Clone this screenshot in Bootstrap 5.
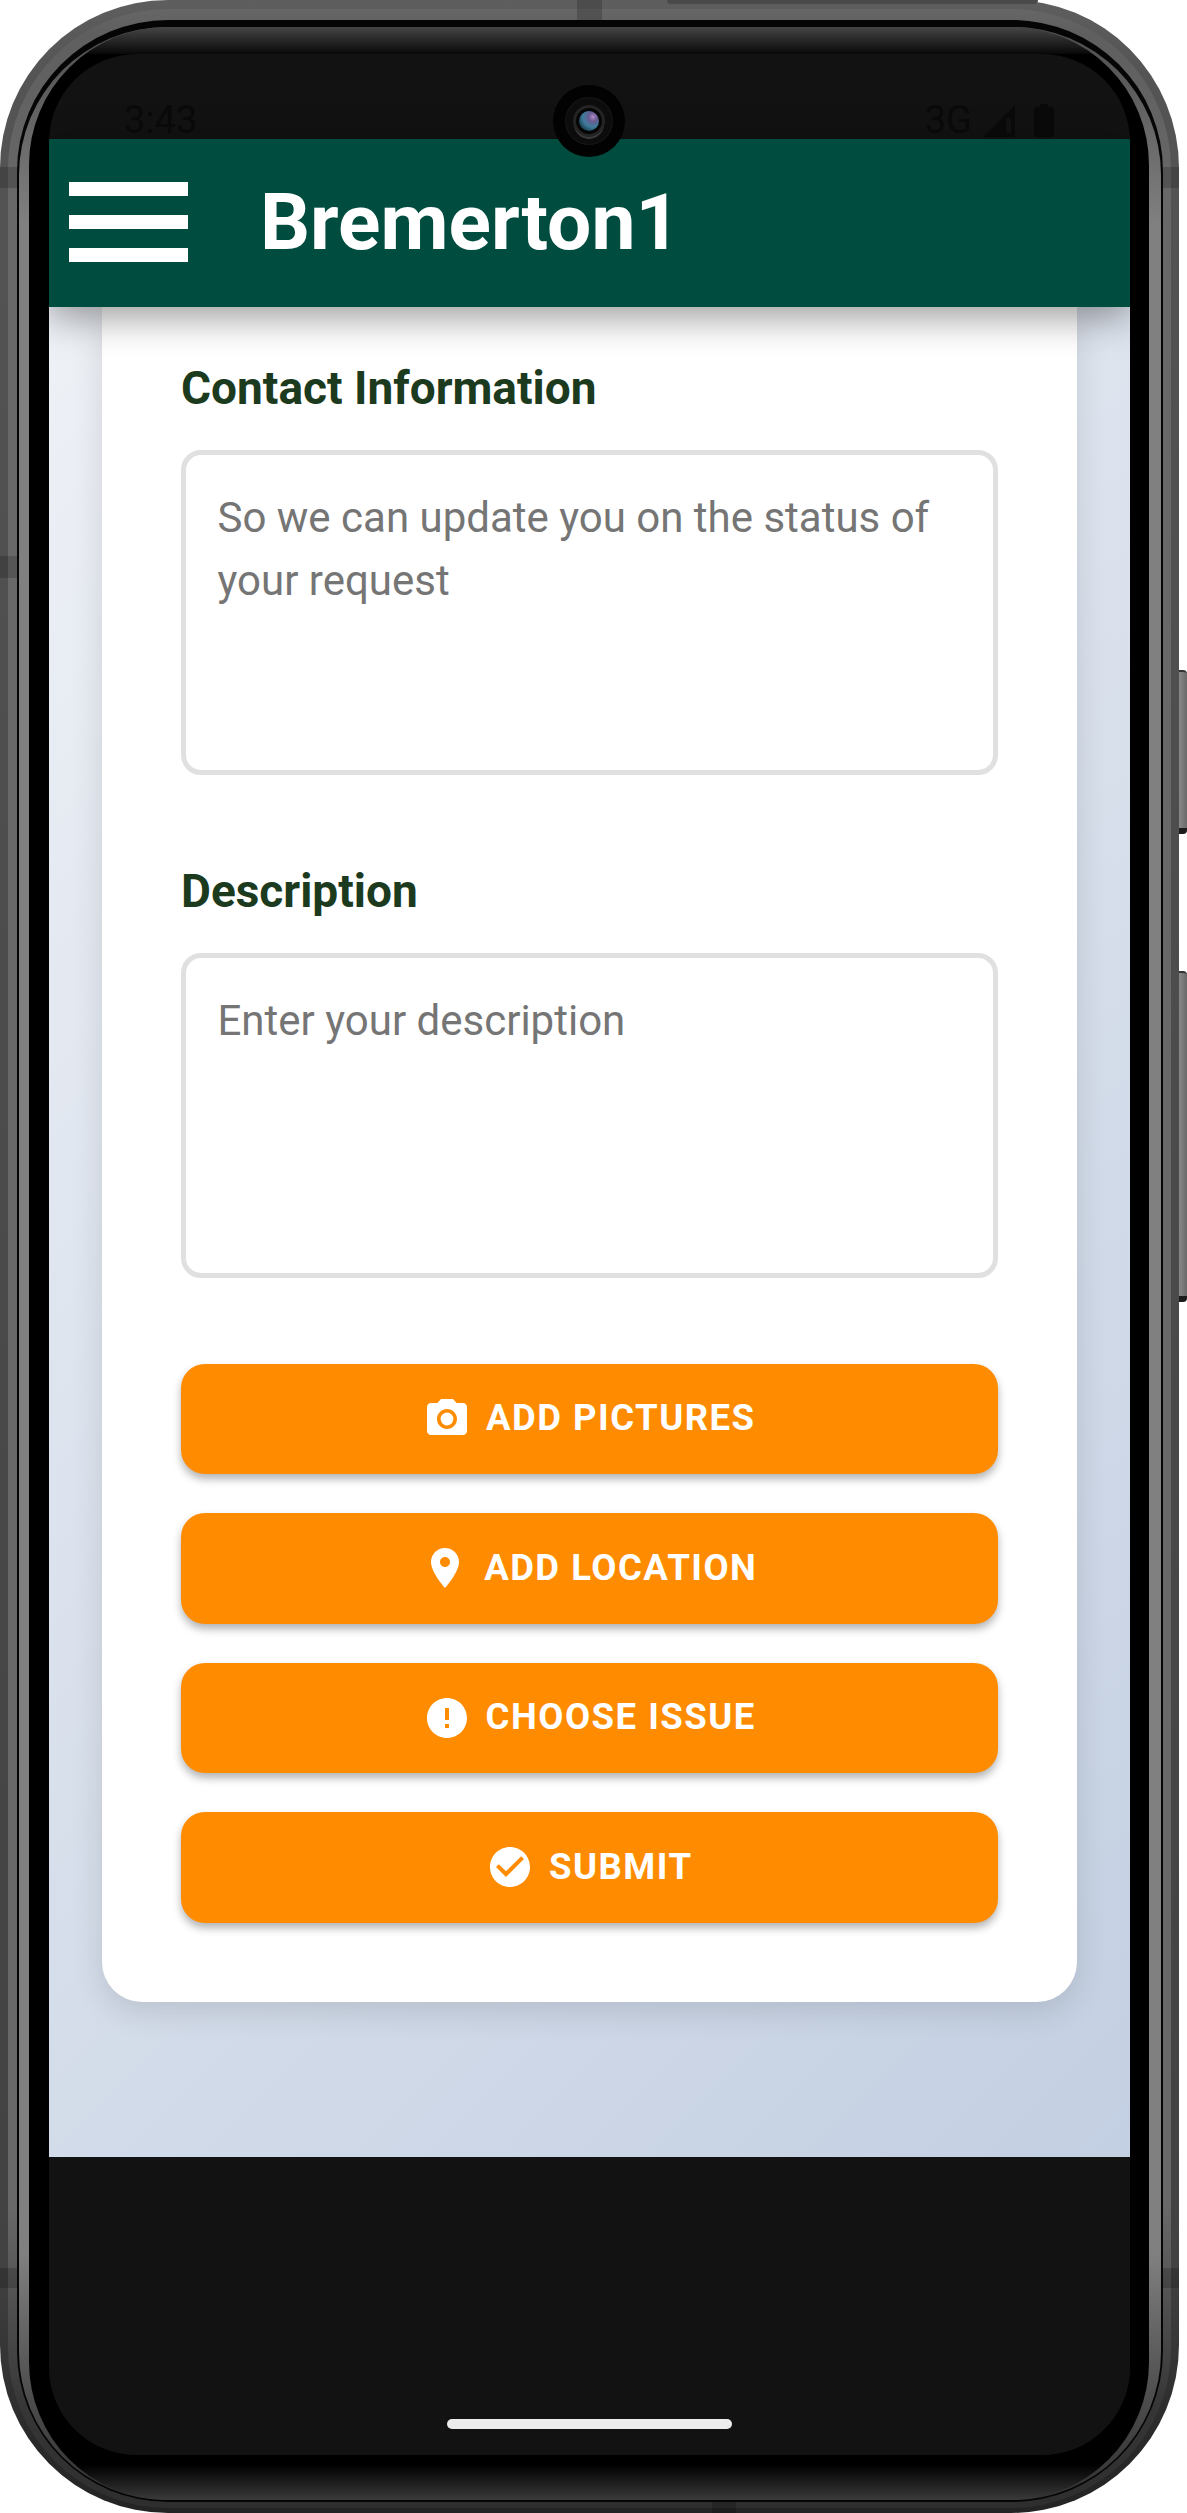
<!DOCTYPE html>
<html lang="en">
<head>
<meta charset="utf-8">
<title>Bremerton1</title>
<link rel="stylesheet" href="https://cdn.jsdelivr.net/npm/bootstrap@5.3.0/dist/css/bootstrap.min.css">
<style>
html,body{margin:0;background:#fff;height:2513px;overflow:hidden;font-family:Roboto,sans-serif}
.dev-wrap{width:1187px;height:2513px;position:relative}
.dev-shell{width:1179px;height:2513px;border-radius:168px;padding:9px 8px 5px 8px;
 background:linear-gradient(to bottom,#5e5e5e 0,#545454 3%,#4a4a4a 50%,#424242 90%,#2a2a2a 97%,#242424 100%)}
.dev-ring{height:100%;border-radius:160px;padding:11px 8px 6px 9px;
 background:linear-gradient(to bottom,#666 0,#5f5f5f 1%,#686868 8%,#686868 88%,#363636 96%,#2e2e2e 100%)}
.dev-line{height:100%;border-radius:151px;background:#050505;padding:7px 2px 2px 2px}
.dev-inner{height:100%;border-radius:148px;padding:0 12px 0 10px;
 background:linear-gradient(to bottom,#4c4c4c 0,#808080 8%,#808080 90%,#4c4c4c 96%,#303030 100%)}
.dev-bezel{height:100%;border-radius:138px;padding:27px 19.5px 45px 20px;
 background:linear-gradient(to bottom,#454545 0,#080808 27px,#000 27px,#000 calc(100% - 35px),#3a3a3a 100%)}
.dev-screen{height:100%;background:#121212;border-radius:88px;overflow:hidden;position:relative}
.stat-row{height:85px;color:#0a0a0a;font-size:38px;line-height:37px;padding:48px 75.5px 0 75px}
.stat-icons{gap:11px}
.batt-gap{margin-left:8px}
.app-head{height:168px;background:#004d40;color:#fff;box-shadow:0 10px 36px rgba(0,0,0,.4);position:relative;z-index:2;padding:0 0 2px 20px}
.burger{width:119px;gap:19.5px}
.burger span{display:block;height:13.5px;background:#fff}
.app-title{font-weight:700;font-size:78.5px;line-height:1;margin:0 0 0 72px}
.scr-main{height:1850px;background:linear-gradient(135deg,#eef1f6 0%,#c3cfe2 100%);padding:0 53px}
.form-sheet{background:#fff;border-radius:0 0 40px 40px;box-shadow:0 10px 32px rgba(0,0,0,.12);padding:56px 79px 79px 79px}
.fld-label{display:block;font-weight:700;font-size:46px;line-height:50px;color:#1b3a1e;margin:0 0 37px 0}
.fld-area{height:325px;border:5px solid #e0e0e0;border-radius:20px;padding:32px 32px 10px 31.5px;font-family:Roboto,sans-serif;font-size:42px;line-height:62.5px;color:#333;margin-bottom:91px;background:#fff;resize:none}
.fld-area::placeholder{color:#757575;opacity:1}
.last-area{margin-bottom:85.5px}
.act-btn{height:110.5px;background:#ff8c00;border:0;border-radius:24px;color:#fff;font-weight:700;font-size:36.5px;letter-spacing:1.5px;box-shadow:0 5px 9px rgba(0,0,0,.3);gap:15px;text-transform:uppercase;width:100%}
.act-btn:hover,.act-btn:active{background:#ff8c00;color:#fff}
.act-btn svg{width:48px;height:48px;fill:#fff;flex:none}
.btn-stack{gap:39px}
.nav-zone{height:298px;background:#121212;padding-bottom:26px}
.home-bar{width:285px;height:10px;border-radius:5px;background:#ececec}
.cam-ring{position:absolute;left:552.5px;top:85px;width:72px;height:72px;border-radius:50%;background:#020202;z-index:5;display:flex;align-items:center;justify-content:center}
.cam-mid{width:48px;height:48px;border-radius:50%;background:#0c0c0c;box-shadow:inset 0 0 0 1px #161616;display:flex;align-items:center;justify-content:center}
.cam-lens{width:26px;height:26px;border-radius:50%;background:#050505;box-shadow:0 0 0 3px #242424,0 3px 0 2px #3c3c3c;display:flex;align-items:center;justify-content:center}
.cam-glass{width:20px;height:20px;border-radius:50%;background:radial-gradient(circle at 70% 30%,#b28ac8 0,#6a5a90 22%,#3f7d9c 50%,#12303f 85%)}
.side-key{position:absolute;left:1179px;width:8px;background:linear-gradient(to right,#888,#6a6a6a);border-radius:0 4px 4px 0;border-top:2px solid #333;border-bottom:6px solid #1c1c1c}
.key-a{top:670px;height:164px}
.key-b{top:971px;height:331px}
.ant{position:absolute;background:rgba(0,0,0,.18)}
.ant-top{left:577px;top:0;width:25px;height:20px}
.ant-bot{left:712px;top:2502px;width:24px;height:11px}
.ant-l1{left:0;top:167px;width:17px;height:21px}
.ant-l2{left:0;top:556px;width:17px;height:22px}
.ant-l3{left:0;top:2268px;width:17px;height:20px}
.ant-r1{left:1163px;top:167px;width:16px;height:21px}
.ant-r2{left:1163px;top:2268px;width:16px;height:20px}
.spk{position:absolute;left:667px;top:0;width:371px;height:4px;background:#4a4a4a;border-radius:0 0 6px 6px}
</style>
</head>
<body>
<div class="dev-wrap">
  <div class="dev-shell">
   <div class="dev-ring">
    <div class="dev-line">
      <div class="dev-inner">
        <div class="dev-bezel">
          <div class="dev-screen d-flex flex-column">
            <div class="stat-row d-flex align-items-center justify-content-between flex-shrink-0">
              <span>3:43</span>
              <span class="stat-icons d-flex align-items-center">
                <span>3G</span>
                <svg width="32" height="32" viewBox="0 0 32 32" aria-hidden="true"><path d="M0 32 32 0v32z" fill="#0a0a0a"/><path d="M23 13h5v15h-5z" fill="#121212"/></svg>
                <svg class="batt-gap" width="20" height="33" viewBox="0 0 20 33" aria-hidden="true"><path d="M6 0h8v3h3a3 3 0 0 1 3 3v24a3 3 0 0 1-3 3H3a3 3 0 0 1-3-3V6a3 3 0 0 1 3-3h3z" fill="#0a0a0a"/></svg>
              </span>
            </div>
            <header class="app-head d-flex align-items-center flex-shrink-0">
              <div class="burger d-flex flex-column"><span></span><span></span><span></span></div>
              <h1 class="app-title">Bremerton1</h1>
            </header>
            <main class="scr-main flex-shrink-0">
              <form class="form-sheet">
                <label class="fld-label" for="contact">Contact Information</label>
                <textarea id="contact" class="form-control fld-area" placeholder="So we can update you on the status of your request"></textarea>
                <label class="fld-label" for="desc">Description</label>
                <textarea id="desc" class="form-control fld-area last-area" placeholder="Enter your description"></textarea>
                <div class="btn-stack d-flex flex-column">
                  <button type="button" class="btn act-btn d-flex align-items-center justify-content-center">
                    <svg viewBox="0 0 24 24" aria-hidden="true"><circle cx="12" cy="12" r="3.2"/><path d="M9 2 7.17 4H4c-1.1 0-2 .9-2 2v12c0 1.1.9 2 2 2h16c1.1 0 2-.9 2-2V6c0-1.1-.9-2-2-2h-3.17L15 2H9zm3 15c-2.76 0-5-2.24-5-5s2.24-5 5-5 5 2.24 5 5-2.24 5-5 5z"/></svg>
                    Add Pictures
                  </button>
                  <button type="button" class="btn act-btn d-flex align-items-center justify-content-center">
                    <svg viewBox="0 0 24 24" aria-hidden="true"><path d="M12 2C8.13 2 5 5.13 5 9c0 5.25 7 13 7 13s7-7.75 7-13c0-3.87-3.13-7-7-7zm0 9.5c-1.38 0-2.5-1.12-2.5-2.5s1.12-2.5 2.5-2.5 2.5 1.12 2.5 2.5-1.12 2.5-2.5 2.5z"/></svg>
                    Add Location
                  </button>
                  <button type="button" class="btn act-btn d-flex align-items-center justify-content-center">
                    <svg viewBox="0 0 24 24" aria-hidden="true"><path d="M12 2C6.48 2 2 6.48 2 12s4.48 10 10 10 10-4.48 10-10S17.52 2 12 2zm1 15h-2v-2h2v2zm0-4h-2V7h2v6z"/></svg>
                    Choose Issue
                  </button>
                  <button type="button" class="btn act-btn d-flex align-items-center justify-content-center">
                    <svg viewBox="0 0 24 24" aria-hidden="true"><path d="M12 2C6.48 2 2 6.48 2 12s4.48 10 10 10 10-4.48 10-10S17.52 2 12 2zm-2 15-5-5 1.41-1.41L10 14.17l7.59-7.59L19 8l-9 9z"/></svg>
                    Submit
                  </button>
                </div>
              </form>
            </main>
            <div class="nav-zone d-flex align-items-end justify-content-center flex-shrink-0">
              <div class="home-bar"></div>
            </div>
          </div>
        </div>
      </div>
    </div>
   </div>
  </div>
  <div class="cam-ring"><div class="cam-mid"><div class="cam-lens"><div class="cam-glass"></div></div></div></div>
  <div class="side-key key-a"></div>
  <div class="side-key key-b"></div>
  <div class="ant ant-top"></div>
  <div class="ant ant-bot"></div>
  <div class="ant ant-l1"></div>
  <div class="ant ant-l2"></div>
  <div class="ant ant-l3"></div>
  <div class="ant ant-r1"></div>
  <div class="ant ant-r2"></div>
  <div class="spk"></div>
</div>
<script src="https://cdn.jsdelivr.net/npm/bootstrap@5.3.0/dist/js/bootstrap.bundle.min.js"></script>
</body>
</html>
